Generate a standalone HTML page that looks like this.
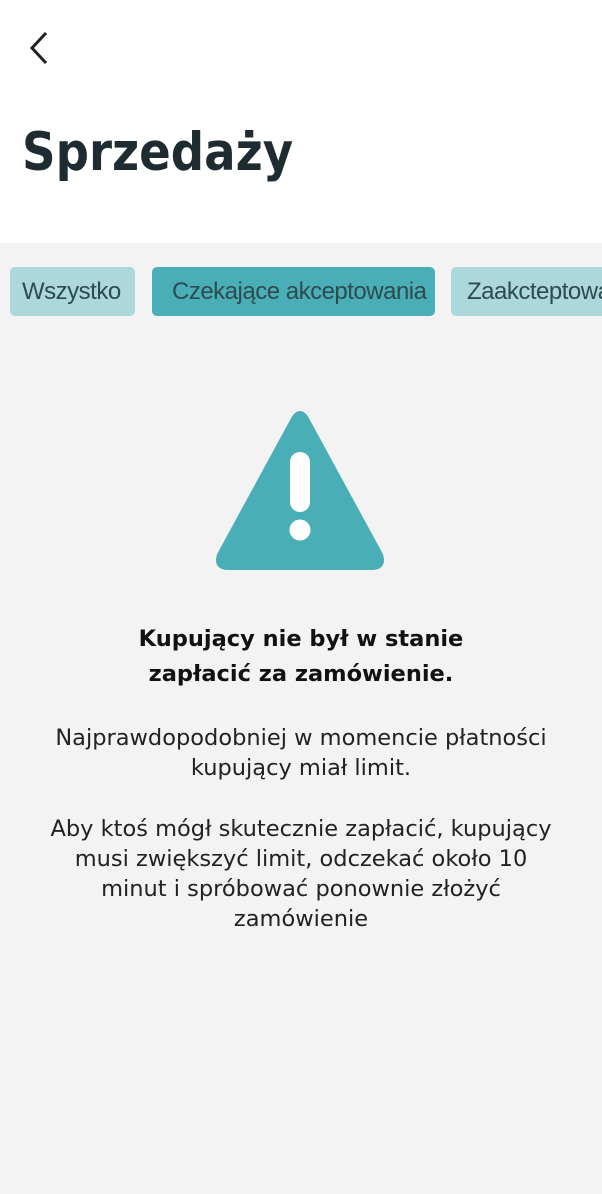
<!DOCTYPE html>
<html><head><meta charset="utf-8"><style>
*{margin:0;padding:0;box-sizing:border-box}
body{width:602px;height:1194px;background:#f3f3f3;font-family:"DejaVu Sans","Liberation Sans",sans-serif;position:relative;overflow:hidden;color:#1f2a2e}
.top{position:absolute;left:0;top:0;width:602px;height:243px;background:#fff}
h1{position:absolute;left:22px;top:122px;font-size:53px;font-weight:bold;color:#1e2b30;transform:scaleX(0.88);transform-origin:left}
.tab{position:absolute;top:267px;height:49px;border-radius:5px;background:#acd7db;color:#2d4b50;font-family:"Liberation Sans",sans-serif;font-size:24px;line-height:49px;white-space:nowrap;overflow:hidden;padding-left:12px;letter-spacing:-0.5px}
.act{background:#4aaeb6;padding-left:20px}
.t{position:absolute;left:0;width:602px;text-align:center;font-size:22.5px;line-height:30px;color:#222}
.b{font-weight:bold;font-size:22.5px;line-height:35px;color:#111}
</style></head><body>
<div class="top"></div>
<svg style="position:absolute;left:26px;top:30px" width="26" height="36"><path d="M20 3 L6 18 L20 33" fill="none" stroke="#222" stroke-width="3"/></svg>
<h1>Sprzedaży</h1>
<div class="tab" style="left:10px;width:125px">Wszystko</div>
<div class="tab act" style="left:152px;width:283px">Czekające akceptowania</div>
<div class="tab" style="left:451px;width:160px;border-radius:5px 0 0 5px;padding-left:16px">Zaakcteptowane</div>
<svg style="position:absolute;left:210px;top:405px" width="180" height="170">
<path d="M90 12 Q90 6 84 14 L10 150 Q6 162 18 162 L162 162 Q174 162 170 150 L96 14 Q90 4 84 14Z" fill="#4aaeb6" stroke="#4aaeb6" stroke-width="6" stroke-linejoin="round"/>
<rect x="80" y="47" width="20" height="60" rx="10" fill="#fff"/>
<circle cx="90" cy="125" r="10.5" fill="#fff"/>
</svg>
<div class="t b" style="top:622px">Kupujący nie był w stanie<br>zapłacić za zamówienie.</div>
<div class="t" style="top:723px">Najprawdopodobniej w momencie płatności<br>kupujący miał limit.</div>
<div class="t" style="top:814px">Aby ktoś mógł skutecznie zapłacić, kupujący<br>musi zwiększyć limit, odczekać około 10<br>minut i spróbować ponownie złożyć<br>zamówienie</div>
</body></html>
